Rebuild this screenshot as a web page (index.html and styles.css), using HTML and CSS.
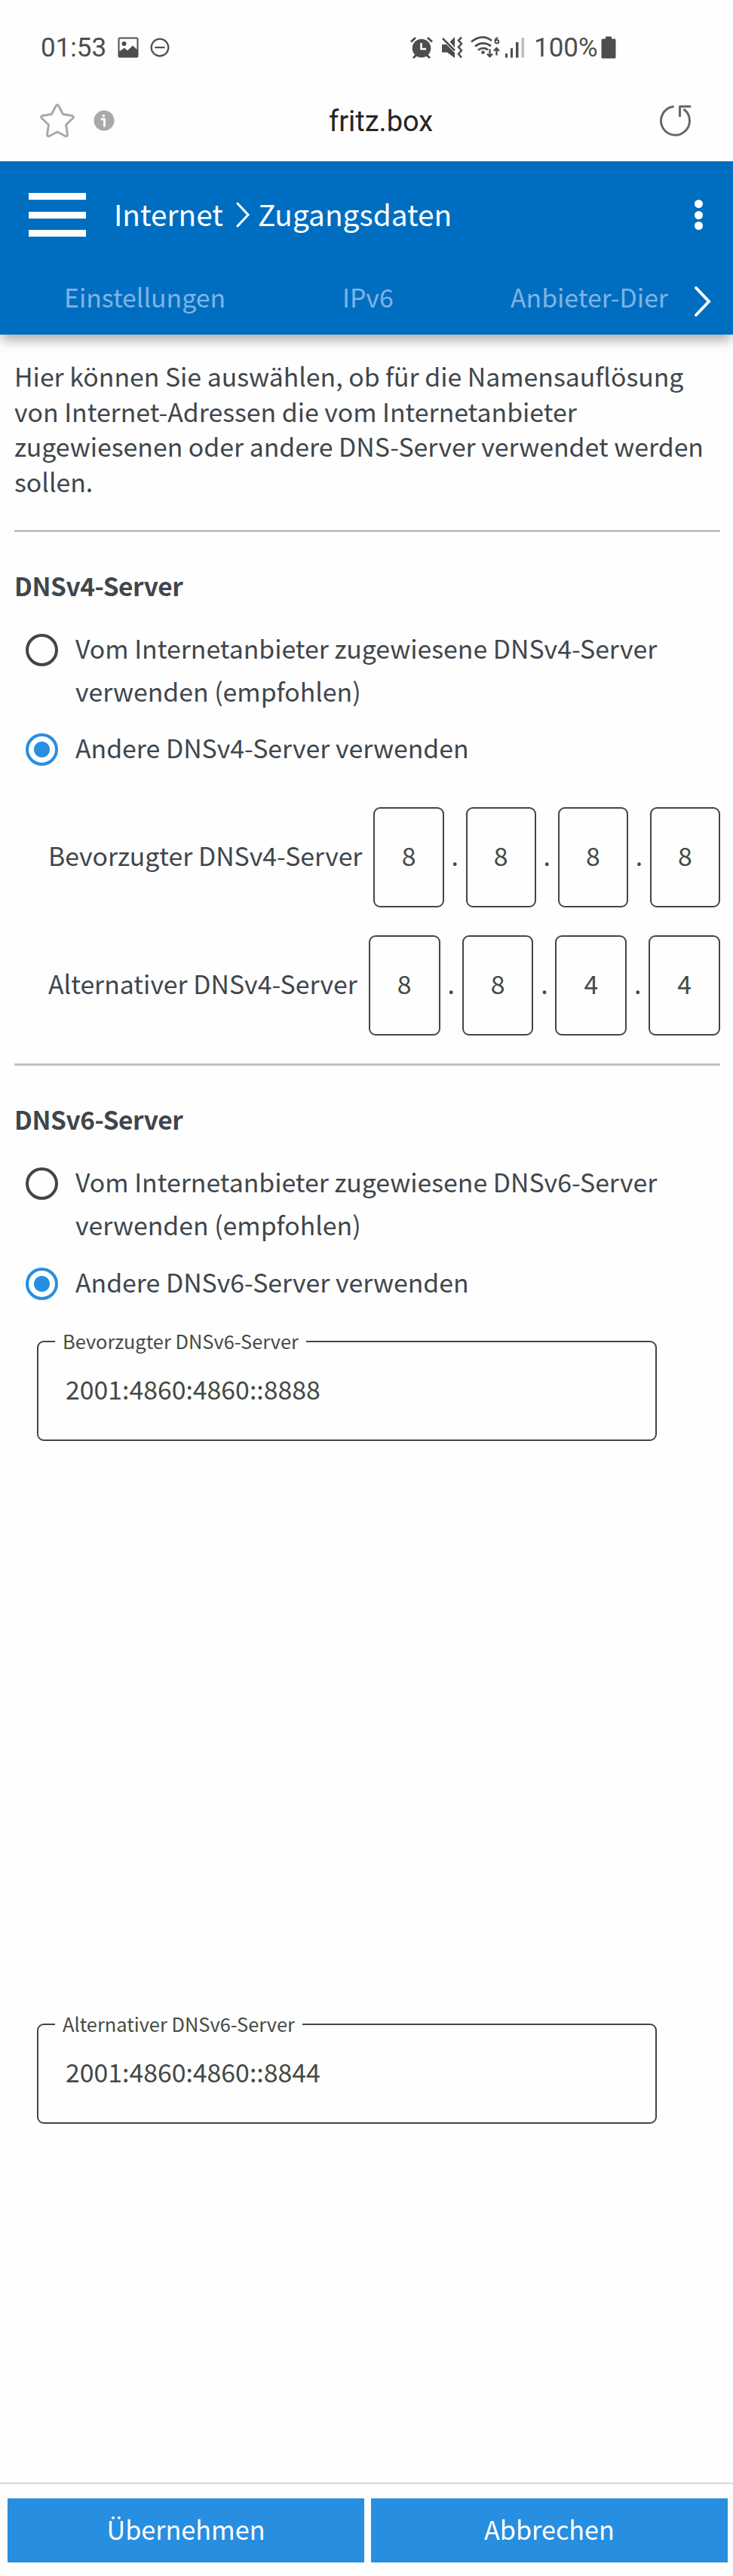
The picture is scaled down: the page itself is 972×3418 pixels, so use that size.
FILE: index.html
```html
<!DOCTYPE html>
<html lang="de">
<head>
    <meta charset="UTF-8">
    <meta name="viewport" content="width=device-width, initial-scale=1.0">
    <title>fritz.box</title>
    <link rel="stylesheet" href="styles.css">
</head>
<body>
    <div class="status-bar">
        <span class="clock">01:53</span>
        <svg class="icon-image" width="28" height="28" viewBox="0 0 28 28">
            <path fill="#4d4d4d" fill-rule="evenodd" d="M3 0.500H25A2.500 2.500 0 0 1 27.500 3V25A2.500 2.500 0 0 1 25 27.500H3A2.500 2.500 0 0 1 0.500 25V3A2.500 2.500 0 0 1 3 0.500ZM2.500 2.500V19L9 14.500L13 18L20 11.500L25.500 16.500V2.500Z"/>
            <circle cx="8.500" cy="9" r="3" fill="#4d4d4d"/>
        </svg>
        <svg class="icon-dnd" width="26" height="26" viewBox="0 0 26 26" fill="none" stroke="#4d4d4d" stroke-width="2.200">
            <circle cx="13" cy="13" r="11.300"/>
            <path d="M6.500 13H19.500"/>
        </svg>
        <svg class="icon-system" width="152" height="32" viewBox="0 0 152 32">
            <!-- alarm -->
            <g fill="none" stroke="#4d4d4d" stroke-width="3">
                <path d="M1 8.500L7 3M29 8.500L23 3M4 30L8 26M26 30L22 26"/>
            </g>
            <circle cx="15" cy="17" r="12.300" fill="#4d4d4d"/>
            <path d="M14.500 10V18H21" fill="none" stroke="#fff" stroke-width="2.500"/>
            <!-- muted / vibrate -->
            <path fill="#4d4d4d" d="M42 12H48L59 23V30L49 22.500H42ZM59 2V16L52.500 8.500Z"/>
            <path fill="none" stroke="#4d4d4d" stroke-width="2.500" d="M43 4L59 20M68 2.500L64 6.500L68 11L64 15.500L68 20L64 24.500L68 29.500"/>
            <!-- wifi -->
            <g fill="none" stroke="#4d4d4d" stroke-width="2.800">
                <path d="M81 8.500Q95.500 -3 108 7M86 14.500Q96 6.500 107 14M90 19.500Q96.500 14.500 103 19"/>
                <path stroke-width="2.300" d="M105.500 18V28M102 24.500L105.500 28L109 24.500M114.500 26.500V17M111 20.500L114.500 17L118 20.500"/>
                <path stroke-width="2" d="M116.500 3C113 3.500 112.500 6 112.500 8"/>
                <circle cx="115" cy="8.200" r="2.300" stroke-width="2"/>
            </g>
            <circle cx="96.500" cy="22.500" r="2.300" fill="#4d4d4d"/>
            <!-- signal -->
            <path fill="#4d4d4d" d="M126 24h3v5.500h-3zM133 17h3v12.500h-3zM140 9h3.500v20.500h-3.500z"/>
            <path fill="#bdbdbd" d="M147.500 3h3.500v26.500h-3.500z"/>
        </svg>
        <span class="percent">100%</span>
        <svg class="icon-battery" width="20" height="30" viewBox="0 0 20 30">
            <path fill="#4d4d4d" d="M6 0.500H14V3.500H18Q19.500 3.500 19.500 5V28Q19.500 29.500 18 29.500H2Q0.500 29.500 0.500 28V5Q0.500 3.500 2 3.500H6Z"/>
        </svg>
    </div>

    <div class="address-bar">
        <svg class="icon-star" width="46" height="46" viewBox="0 0 46 46" fill="none" stroke="#a9a9a9" stroke-width="3" stroke-linejoin="round">
            <path d="M21.200 3.500Q23 0.500 24.800 3.500L30.500 14.500L42.500 16.500Q45.500 17.500 43.500 20L34.500 28.500L36.500 41.500Q36.500 44.500 33.500 43.500L23 38L12.500 43.500Q9.500 44.500 9.500 41.500L11.500 28.500L2.500 20Q0.500 17.500 3.500 16.500L15.500 14.500Z"/>
        </svg>
        <svg class="icon-info" width="28" height="28" viewBox="0 0 28 28">
            <circle cx="14" cy="14" r="13.500" fill="#a9a9a9"/>
            <circle cx="13.500" cy="7.500" r="1.700" fill="#fff"/>
            <path d="M11 12H14.500V21" fill="none" stroke="#fff" stroke-width="3" stroke-linecap="round" stroke-linejoin="round"/>
        </svg>
        <span class="url">fritz.box</span>
        <svg class="icon-reload" width="44" height="44" viewBox="0 0 44 44" fill="none" stroke="#666" stroke-width="3" stroke-linecap="round" stroke-linejoin="round">
            <path d="M18.300 3.500A19 19 0 1 0 33.500 7.500M41 3.200H27.500V16"/>
        </svg>
    </div>

    <header class="header">
        <div class="title-row">
            <div class="menu"><span></span><span></span><span></span></div>
            <span class="crumb">Internet</span>
            <svg class="crumb-arrow" width="20" height="36" viewBox="0 0 20 36" fill="none" stroke="#fff" stroke-width="3" stroke-linecap="round">
                <path d="M3 3L17 18L3 33"/>
            </svg>
            <span class="crumb">Zugangsdaten</span>
            <div class="more"><span></span><span></span><span></span></div>
        </div>
        <nav class="tabs">
            <span class="tab tab-settings">Einstellungen</span>
            <span class="tab tab-ipv6">IPv6</span>
            <span class="tab">Anbieter-Dier</span>
            <svg class="tab-arrow" width="24" height="42" viewBox="0 0 24 42" fill="none" stroke="#fff" stroke-width="4" stroke-linecap="round">
                <path d="M3 3L20 21L3 39"/>
            </svg>
        </nav>
    </header>

    <main class="content">
        <p class="intro">Hier können Sie auswählen, ob für die Namensauflösung<br>von Internet-Adressen die vom Internetanbieter<br>zugewiesenen oder andere DNS-Server verwendet werden<br>sollen.</p>
        <hr>

        <h2>DNSv4-Server</h2>
        <label class="option">
            <span class="radio"></span>
            <span>Vom Internetanbieter zugewiesene DNSv4-Server<br>verwenden (empfohlen)</span>
        </label>
        <label class="option">
            <span class="radio checked"></span>
            <span>Andere DNSv4-Server verwenden</span>
        </label>
        <div class="ip-row ip-first">
            <span class="ip-label">Bevorzugter DNSv4-Server</span>
            <input type="text" value="8"><span class="dot">.</span>
            <input type="text" value="8"><span class="dot">.</span>
            <input type="text" value="8"><span class="dot">.</span>
            <input type="text" value="8">
        </div>
        <div class="ip-row">
            <span class="ip-label">Alternativer DNSv4-Server</span>
            <input type="text" value="8"><span class="dot">.</span>
            <input type="text" value="8"><span class="dot">.</span>
            <input type="text" value="4"><span class="dot">.</span>
            <input type="text" value="4">
        </div>
        <hr>

        <h2>DNSv6-Server</h2>
        <label class="option">
            <span class="radio"></span>
            <span>Vom Internetanbieter zugewiesene DNSv6-Server<br>verwenden (empfohlen)</span>
        </label>
        <label class="option">
            <span class="radio checked"></span>
            <span>Andere DNSv6-Server verwenden</span>
        </label>
        <div class="field">
            <label for="dns6-first">Bevorzugter DNSv6-Server</label>
            <input type="text" id="dns6-first" value="2001:4860:4860::8888">
        </div>
        <div class="field field-second">
            <label for="dns6-second">Alternativer DNSv6-Server</label>
            <input type="text" id="dns6-second" value="2001:4860:4860::8844">
        </div>
    </main>

    <footer class="footer">
        <button>Übernehmen</button>
        <button>Abbrechen</button>
    </footer>
</body>
</html>
```
FILE: styles.css
```css
* {
    box-sizing: border-box;
}

body {
    margin: 0;
    height: 3418px;
    display: flex;
    flex-direction: column;
    background-color: #fefefe;
    color: #3f464c;
    font-family: "Noto Sans CJK SC", "Open Sans", sans-serif;
    font-size: 33.8px;
}

svg {
    flex: none;
    display: block;
}

input, button {
    font-family: inherit;
    font-size: inherit;
}

/* Phone status bar */
.status-bar {
    display: flex;
    align-items: center;
    height: 125px;
    padding-left: 54px;
    font-family: Roboto, sans-serif;
    font-size: 35px;
    color: #4d4d4d;
}

.clock {
    width: 102px;
    padding-top: 2px;
}

.icon-dnd {
    margin-left: 15px;
}

.icon-system {
    margin-left: 319px;
}

.percent {
    width: 88px;
    margin-left: 12px;
    padding-top: 2px;
}

.icon-battery {
    margin-left: 1px;
}

.address-bar {
    display: flex;
    align-items: center;
    height: 89px;
    padding: 0 54px 20px 53px;
    font-family: Roboto, sans-serif;
    color: #252525;
}

.icon-info {
    margin-left: 25px;
}

.url {
    margin-left: 284px;
    padding-top: 2px;
    font-size: 38px;
}

.icon-reload {
    margin-left: auto;
}

/* Blue page header */
.header {
    height: 230px;
    background-color: #006ec0;
    color: #fff;
    box-shadow: 0 10px 14px -2px rgba(0, 0, 0, 0.3);
}

.title-row {
    display: flex;
    align-items: center;
    height: 142px;
    padding: 0 40px 0 38px;
}

.menu {
    display: flex;
    flex-direction: column;
    gap: 15.5px;
    width: 76px;
    margin-right: 37px;
}

.menu span {
    height: 9px;
    background-color: #fff;
}

.crumb {
    font-size: 38.8px;
    line-height: 50px;
    padding-bottom: 5px;
}

.crumb-arrow {
    margin: 0 10px 0 16px;
}

.more {
    display: flex;
    flex-direction: column;
    gap: 3.5px;
    margin-left: auto;
}

.more span {
    width: 11px;
    height: 11px;
    border-radius: 50%;
    background-color: #fff;
}

.tabs {
    display: flex;
    align-items: center;
    height: 88px;
    padding: 0 28px 0 85px;
    color: #80b3e6;
}

.tab {
    line-height: 46px;
    padding-bottom: 13px;
}

.tab-settings {
    width: 369px;
}

.tab-ipv6 {
    width: 223px;
}

.tab-arrow {
    margin: 0 0 0 auto;
}

/* DNS settings */
.content {
    flex: 1;
    padding: 32px 17px 0 19px;
}

.intro {
    margin: 0 0 40px;
    line-height: 46.7px;
    white-space: nowrap;
}

hr {
    height: 3px;
    margin: 0;
    border: none;
    background-color: #bcc4c4;
}

h2 {
    margin: 48px 0 31px;
    font-size: 33.4px;
    font-weight: bold;
    letter-spacing: -0.4px;
    line-height: 46px;
}

.option {
    display: flex;
    gap: 23px;
    margin: 0 0 19px 15px;
    line-height: 56.8px;
    white-space: nowrap;
}

.option span:last-child {
    padding-top: 1px;
    margin-bottom: -1px;
}

.radio {
    flex: none;
    width: 43px;
    height: 43px;
    margin-top: 10px;
    border: 4px solid #3f464c;
    border-radius: 50%;
}

.radio.checked {
    border-color: #278ee0;
    background: radial-gradient(circle, #278ee0 10px, transparent 11px);
}

.ip-row {
    display: flex;
    align-items: center;
    height: 133px;
    margin: 0 0 37px 45px;
}

.ip-first {
    margin-top: 51px;
}

.ip-label {
    margin-right: 15px;
    padding-bottom: 6px;
    white-space: nowrap;
}

.ip-row input {
    flex: 1;
    min-width: 0;
    height: 133px;
    padding: 0 0 6px;
    border: 2px solid #3f464c;
    border-radius: 9px;
    background: none;
    color: #444a44;
    text-align: center;
}

.dot {
    width: 29px;
    padding-bottom: 6px;
    text-align: center;
}

.field {
    position: relative;
    width: 822px;
    height: 133px;
    margin: 50px 0 0 30px;
    border: 2px solid #3f464c;
    border-radius: 9px;
}

.field-second {
    margin-top: 773px;
}

/* Label sits on the top border */
.field label {
    position: absolute;
    top: -20px;
    left: 22px;
    padding: 0 10px;
    background-color: #fefefe;
    color: #444a44;
    font-size: 25.4px;
    line-height: 36px;
    white-space: nowrap;
}

.field input {
    width: 100%;
    height: 129px;
    padding: 0 36px 5px;
    border: none;
    background: none;
    color: #444a44;
}

.footer {
    display: flex;
    gap: 9px;
    height: 124px;
    padding: 19px 7px 18px 10px;
    border-top: 2px solid #d9d9d9;
}

.footer button {
    flex: 1;
    padding: 0 0 5px;
    border: none;
    background-color: #278ee0;
    color: #fff;
    font-size: 34.2px;
}
```
